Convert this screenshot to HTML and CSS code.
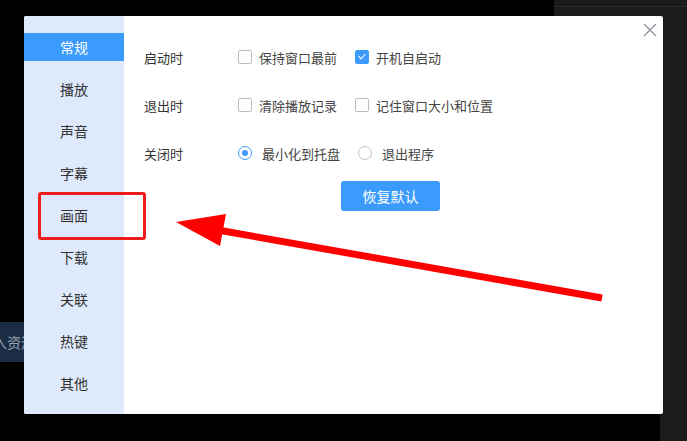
FILE: index.html
```html
<!DOCTYPE html>
<html lang="zh-CN">
<head>
    <meta charset="UTF-8">
    <title>设置</title>
    <link rel="stylesheet" href="styles.css">
</head>
<body>
    <div class="bg-window"></div>
    <div class="bg-strip"></div>
    <div class="bg-button">导入资源</div>

    <div class="dialog">
        <div class="sidebar">
            <div class="nav-item active">常规</div>
            <div class="nav-item">播放</div>
            <div class="nav-item">声音</div>
            <div class="nav-item">字幕</div>
            <div class="nav-item">画面</div>
            <div class="nav-item">下载</div>
            <div class="nav-item">关联</div>
            <div class="nav-item">热键</div>
            <div class="nav-item">其他</div>
        </div>
        <div class="main">
            <div class="row">
                <span class="label">启动时</span>
                <label class="opt w117"><span class="box"></span>保持窗口最前</label>
                <label class="opt"><span class="box checked"></span>开机自启动</label>
            </div>
            <div class="row">
                <span class="label">退出时</span>
                <label class="opt w117"><span class="box"></span>清除播放记录</label>
                <label class="opt"><span class="box"></span>记住窗口大小和位置</label>
            </div>
            <div class="row">
                <span class="label">关闭时</span>
                <label class="opt radio w120"><span class="dot on"></span>最小化到托盘</label>
                <label class="opt radio"><span class="dot"></span>退出程序</label>
            </div>
            <button class="reset-btn">恢复默认</button>
        </div>
        <svg class="close" width="14" height="14" viewBox="0 0 14 14">
            <path d="M1 1L13 13M13 1L1 13" stroke="#8a8f99" stroke-width="1.2" fill="none"/>
        </svg>
    </div>

    <div class="mark-box"></div>
    <svg class="arrow" width="687" height="441" viewBox="0 0 687 441">
        <line x1="602" y1="298" x2="212" y2="229" stroke="#ff0000" stroke-width="7"/>
        <polygon points="176,222 226,214 220,246" fill="#ff0000"/>
    </svg>
</body>
</html>
```

FILE: styles.css
```css
body {
    margin: 0;
    width: 687px;
    height: 441px;
    background: #000;
    font-family: "Noto Sans CJK SC", "Microsoft YaHei", sans-serif;
    overflow: hidden;
    position: relative;
}
.bg-window {
    position: absolute;
    left: 554px;
    top: 0;
    width: 133px;
    height: 16px;
    background: #1b1b1b;
    border-bottom: 0;
}
.bg-window::after {
    content: "";
    position: absolute;
    left: 0;
    right: 0;
    top: 6px;
    height: 1px;
    background: #2c2c2c;
}
.bg-strip {
    position: absolute;
    left: 660px;
    top: 16px;
    width: 27px;
    height: 425px;
    background: #1b1b1b;
}
.bg-button {
    position: absolute;
    left: -22px;
    top: 322px;
    width: 80px;
    height: 40px;
    line-height: 40px;
    padding-left: 1px;
    background: #1a2d45;
    color: #97a3b1;
    font-size: 14px;
    white-space: nowrap;
}
.dialog {
    position: absolute;
    left: 24px;
    top: 16px;
    width: 639px;
    height: 398px;
    background: #fff;
    border-radius: 2px;
    display: flex;
    overflow: hidden;
}
.sidebar {
    width: 100px;
    background: #deeafc;
    padding-top: 17px;
    display: flex;
    flex-direction: column;
    gap: 14px;
}
.nav-item {
    height: 28px;
    line-height: 28px;
    text-align: center;
    font-size: 14px;
    color: #333;
}
.nav-item.active {
    background: #3a9bfc;
    color: #fff;
}
.main {
    flex: 1;
    padding: 17px 0 0 20px;
}
.row {
    height: 48px;
    display: flex;
    align-items: center;
    font-size: 13px;
    color: #333;
}
.label {
    width: 94px;
}
.opt {
    display: flex;
    align-items: center;
    color: #444;
}
.w117 { width: 117px; }
.w120 { width: 120px; }
.box {
    width: 12px;
    height: 12px;
    border: 1px solid #b8bcc4;
    border-radius: 2px;
    margin-right: 7px;
    position: relative;
}
.box.checked {
    background: #3a9bfc;
    border-color: #3a9bfc;
}
.box.checked::after {
    content: "";
    position: absolute;
    left: 4px;
    top: 1px;
    width: 3px;
    height: 6px;
    border: solid #fff;
    border-width: 0 1.5px 1.5px 0;
    transform: rotate(45deg);
}
.dot {
    width: 12px;
    height: 12px;
    border: 1px solid #c0c4cc;
    border-radius: 50%;
    margin-right: 10px;
    position: relative;
}
.dot.on {
    border-color: #3a9bfc;
}
.dot.on::after {
    content: "";
    position: absolute;
    left: 3px;
    top: 3px;
    width: 6px;
    height: 6px;
    border-radius: 50%;
    background: #3a9bfc;
}
.reset-btn {
    margin: 4px 0 0 197px;
    width: 99px;
    height: 30px;
    border: none;
    border-radius: 3px;
    background: #3a9bfc;
    color: #fff;
    font-family: inherit;
    font-size: 14px;
}
.close {
    position: absolute;
    right: 6px;
    top: 7px;
}
.mark-box {
    position: absolute;
    left: 38px;
    top: 192px;
    width: 102px;
    height: 42px;
    border: 3px solid #ee1c1c;
    border-radius: 3px;
}
.arrow {
    position: absolute;
    left: 0;
    top: 0;
}
```
